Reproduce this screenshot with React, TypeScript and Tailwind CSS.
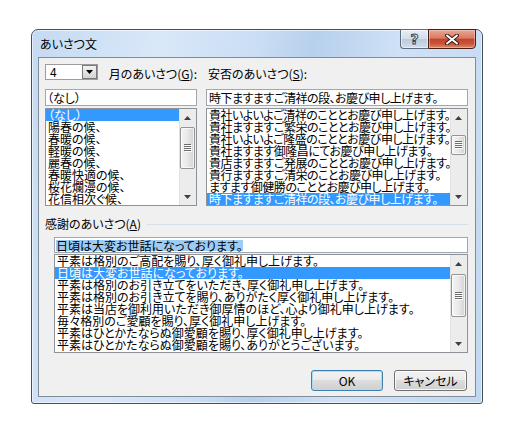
import React from "react";

const jp = "font-['Noto_Sans_CJK_JP','Noto_Sans_CJK_SC',sans-serif] [font-feature-settings:'palt']";

const monthItems = [
  "（なし）",
  "陽春の候、",
  "春暖の候、",
  "軽暖の候、",
  "麗春の候、",
  "春暖快適の候、",
  "桜花爛漫の候、",
  "花信相次ぐ候、",
];

const safetyItems = [
  "貴社いよいよご清祥のこととお慶び申し上げます。",
  "貴社ますますご繁栄のこととお慶び申し上げます。",
  "貴社いよいよご隆盛のこととお慶び申し上げます。",
  "貴社ますます御隆昌にてお慶び申し上げます。",
  "貴店ますますご発展のこととお慶び申し上げます。",
  "貴行ますますご清栄のことお慶び申し上げます。",
  "ますます御健勝のこととお慶び申し上げます。",
  "時下ますますご清祥の段、お慶び申し上げます。",
];

const thanksItems = [
  "平素は格別のご高配を賜り、厚く御礼申し上げます。",
  "日頃は大変お世話になっております。",
  "平素は格別のお引き立てをいただき、厚く御礼申し上げます。",
  "平素は格別のお引き立てを賜り、ありがたく厚く御礼申し上げます。",
  "平素は当店を御利用いただき御厚情のほど、心より御礼申し上げます。",
  "毎々格別のご愛顧を賜り、厚く御礼申し上げます。",
  "平素はひとかたならぬ御愛顧を賜り、厚く御礼申し上げます。",
  "平素はひとかたならぬ御愛顧を賜り、ありがとうございます。",
];

function Arrow({ up }: { up?: boolean }) {
  return (
    <svg width="7" height="4" viewBox="0 0 7 4">
      <path d={up ? "M3.5 0L7 4H0Z" : "M0 0H7L3.5 4Z"} fill="#404040" />
    </svg>
  );
}

function Grip() {
  return (
    <svg width="8" height="8" viewBox="0 0 8 8">
      {[0, 2, 4, 6].map((y) => (
        <g key={y}>
          <rect x="0" y={y} width="7" height="1" fill="#6b6b6b" />
          <rect x="1" y={y + 1} width="7" height="1" fill="#ffffff" />
        </g>
      ))}
    </svg>
  );
}

function ScrollBar({ thumb }: { thumb: string }) {
  return (
    <div className="flex w-[17px] shrink-0 flex-col bg-[#ececec] shadow-[inset_1px_0_0_#e2e2e2]">
      <div className="flex h-[17px] items-center justify-center">
        <Arrow up />
      </div>
      <div className="flex-1">
        <div
          className={`mx-[1px] flex items-center justify-center rounded-[2px] border border-[#959595] bg-gradient-to-r from-[#f5f5f5] via-[#e8e8e8] to-[#d3d3d3] shadow-[inset_0_0_0_1px_rgba(255,255,255,0.7)] ${thumb}`}
        >
          <Grip />
        </div>
      </div>
      <div className="flex h-[17px] items-center justify-center">
        <Arrow />
      </div>
    </div>
  );
}

function ListBox({
  items,
  selected,
  thumb,
  className,
}: {
  items: string[];
  selected: number;
  thumb: string;
  className: string;
}) {
  return (
    <div className={`flex border border-[#8e9399] bg-white ${className}`}>
      <div className="min-w-0 flex-1 overflow-hidden">
        {items.map((t, i) => (
          <div
            key={i}
            className={`h-[12px] whitespace-nowrap pl-[2px] text-[12px] leading-[12px] ${
              i === selected ? "bg-[#3399ff] text-white" : "text-black"
            }`}
          >
            {t}
          </div>
        ))}
      </div>
      <ScrollBar thumb={thumb} />
    </div>
  );
}

function Field({ children, className }: { children: React.ReactNode; className: string }) {
  return (
    <div
      className={`flex items-center overflow-hidden whitespace-nowrap border border-[#a3a7ad] bg-white text-[12px] leading-[14px] text-black ${className}`}
    >
      {children}
    </div>
  );
}

function Button({ label, primary, className }: { label: string; primary?: boolean; className: string }) {
  return (
    <button
      className={`flex h-[21px] items-center justify-center rounded-[3px] border text-[12px] text-black bg-[linear-gradient(#f2f2f2_0%,#ebebeb_45%,#dddddd_50%,#cfcfcf_100%)] ${
        primary
          ? "border-[#3c7fb1] shadow-[inset_0_0_0_1px_#aedcf6]"
          : "border-[#707070] shadow-[inset_0_0_0_1px_rgba(255,255,255,0.8)]"
      } ${className}`}
    >
      {label}
    </button>
  );
}

export default function App() {
  return (
    <div className={`h-[438px] w-[521px] overflow-hidden bg-white pl-[31px] pt-[29px] ${jp}`}>
      <div className="flex h-[375px] w-[452px] flex-col rounded-t-[7px] rounded-b-[3px] border border-[#44505c] bg-[linear-gradient(100deg,#c4daf2_0%,#d9e8f9_25%,#c9ddf4_45%,#b7d0ec_55%,#cfe1f6_72%,#c2d8f0_100%)] px-[6px] pb-[6px] shadow-[inset_0_0_0_1px_rgba(255,255,255,0.6)]">
        {/* title bar */}
        <div className="flex h-[27px] shrink-0 items-start justify-between">
          <span className="ml-[2px] pt-[6px] text-[12px] leading-[16px] text-black">あいさつ文</span>
          <div className="-mt-[1px] flex">
            <div className="flex h-[20px] w-[28px] items-center justify-center rounded-bl-[4px] border border-r-0 border-[#5d6d80] bg-[linear-gradient(#e6eef7_0%,#d3deeb_48%,#bccbdc_52%,#d2deec_100%)] shadow-[inset_0_0_0_1px_rgba(255,255,255,0.5)]">
              <span className="font-['DejaVu_Sans',sans-serif] text-[14px] font-bold leading-none text-[#e8eef4] [-webkit-text-stroke:1px_#3c4652]">
                ?
              </span>
            </div>
            <div className="flex h-[20px] w-[48px] items-center justify-center rounded-br-[4px] border border-[#4b1c14] bg-[linear-gradient(#e9a898_0%,#d97862_45%,#c4432a_52%,#c75237_75%,#dd8b6c_100%)] shadow-[inset_0_0_0_1px_rgba(255,220,210,0.45)]">
              <svg width="14" height="11" viewBox="0 0 14 11">
                <path d="M2 1.5L12 9.5M12 1.5L2 9.5" stroke="#3a1d18" strokeWidth="4" strokeLinecap="round" />
                <path d="M2 1.5L12 9.5M12 1.5L2 9.5" stroke="#ffffff" strokeWidth="2" strokeLinecap="round" />
              </svg>
            </div>
          </div>
        </div>

        {/* client area */}
        <div className="flex flex-1 flex-col border border-[#7f8c99] bg-[#f0f0f0] pt-[6px]">
          <div className="flex pl-[6px] pr-[7px]">
            <div className="flex w-[152px] flex-col">
              <div className="flex h-[16px] items-start">
                <div className="flex h-[16px] w-[61px] border border-[#9c9c9c] bg-white">
                  <span className="flex-1 pl-[4px] text-[12px] leading-[14px]">4</span>
                  <div className="flex w-[15px] items-center justify-center border border-[#7a7a7a] bg-gradient-to-b from-[#f3f3f3] to-[#d3d3d3]">
                    <svg width="7" height="4" viewBox="0 0 7 4">
                      <path d="M0 0H7L3.5 4Z" fill="#000" />
                    </svg>
                  </div>
                </div>
                <span className="ml-[11px] pt-[2px] whitespace-nowrap text-[12px] leading-[16px]">
                  月のあいさつ(<span className="underline">G</span>):
                </span>
              </div>
              <Field className="mt-[9px] h-[17px] pl-[1px]">（なし）</Field>
              <ListBox items={monthItems} selected={0} thumb="mt-[1px] h-[42px]" className="mt-[2px] h-[98px]" />
            </div>
            <div className="ml-[9px] flex w-[262px] flex-col tracking-[-0.5px]">
              <span className="h-[16px] pl-[2px] pt-[2px] whitespace-nowrap text-[12px] leading-[16px] tracking-normal">
                安否のあいさつ(<span className="underline">S</span>):
              </span>
              <Field className="mt-[9px] h-[17px] pl-[2px]">時下ますますご清祥の段、お慶び申し上げます。</Field>
              <ListBox items={safetyItems} selected={7} thumb="mt-[9px] h-[20px]" className="mt-[2px] h-[98px]" />
            </div>
          </div>

          <div className="mt-[10px] flex h-[16px] items-center pl-[6px] pr-[7px]">
            <span className="whitespace-nowrap text-[12px] leading-[16px]">
              感謝のあいさつ(<span className="underline">A</span>)
            </span>
            <div className="ml-[6px] h-px flex-1 bg-[#d5dfe5]" />
          </div>

          <div className="flex flex-col pl-[15px] pr-[7px]">
            <Field className="mt-[5px] h-[16px] pl-[1px]">
              <span className="inline-block h-[11px] bg-[#9fccf3] leading-[11px]">日頃は大変お世話になっております。</span>
            </Field>
            <ListBox items={thanksItems} selected={1} thumb="mt-[2px] h-[43px]" className="mt-[1px] h-[99px]" />
          </div>

          <div className="mt-[17px] flex justify-end gap-[11px] pr-[8px]">
            <Button label="OK" primary className="w-[72px]" />
            <Button label="キャンセル" className="w-[73px]" />
          </div>
        </div>
      </div>
    </div>
  );
}
